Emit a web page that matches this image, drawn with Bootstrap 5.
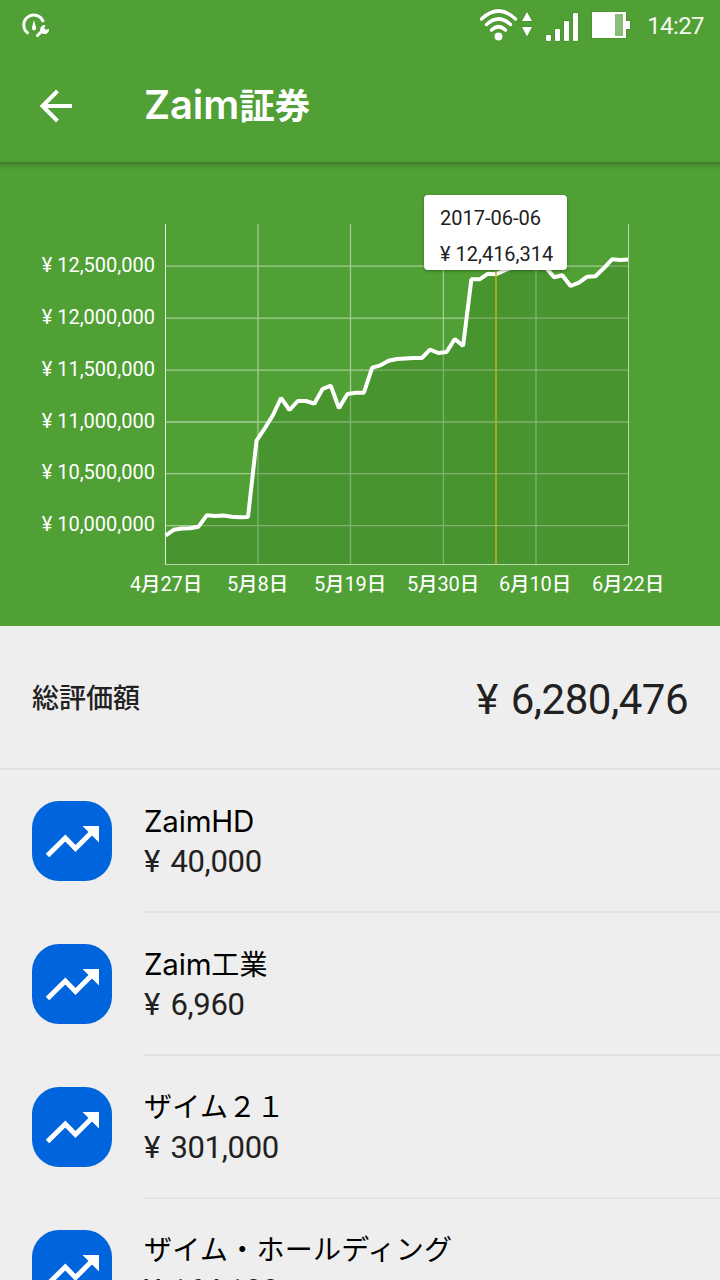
<!DOCTYPE html>
<html lang="ja">
<head>
<meta charset="utf-8">
<meta name="viewport" content="width=device-width, initial-scale=1">
<title>Zaim証券</title>
<link href="https://cdn.jsdelivr.net/npm/bootstrap@5.3.0/dist/css/bootstrap.min.css" rel="stylesheet">
<style>
body{font-family:Roboto,"Noto Sans CJK JP",sans-serif;background:#eee;color:#212121;height:1280px;overflow:hidden}
.bg-zaim{background:#50a035}
.statusbar{height:50px}
.statusbar svg,.appbar svg,.chart-area svg{display:block}
.clock{font-size:24px;line-height:28px;color:#f4faf2;letter-spacing:-.6px}
.appbar{height:112px;padding-left:36px}
.appbar h1{font:700 35.5px/44px Inter,"Noto Sans CJK JP",sans-serif;color:#fff;margin-left:68px;padding-bottom:1px}
.appbar h1 span{font-size:40px;font-weight:600;letter-spacing:-.1px}
.chart-area{height:464px}
.chart-area::before{content:"";position:absolute;inset:0 0 auto;height:8px;background:linear-gradient(rgba(0,0,0,.25),rgba(0,0,0,.1) 40%,transparent)}
.axis{font-size:20px;fill:#fff}
.dates{letter-spacing:-.1px}
.dates tspan{font-weight:500;font-size:19.5px}
.tip{left:424px;top:33px;width:143px;height:75px;background:#fff;border-radius:4px;font-size:20px;line-height:36px;padding:5px 0 0 16px;box-shadow:0 1px 3px rgba(0,0,0,.35);white-space:nowrap}
.total{height:144px;padding:0 32px;border-bottom:2px solid #e2e2e2}
.total-label{font-size:27px;line-height:40px;font-weight:500;padding-top:3px}
.total-value{font-size:42px;line-height:50px;letter-spacing:-.5px;word-spacing:3px;padding-top:5px}
.holding{height:143px;padding-left:32px}
.tile{width:80px;height:80px;border-radius:27px;background:#0064dd;margin:31px 32px 0 0}
.holding-text{border-bottom:2px solid #e2e2e2;padding-top:31px;white-space:nowrap}
.holding-name{font:400 28px/41px Inter,"Noto Sans CJK JP",sans-serif;color:#000;height:41px;letter-spacing:.25px}
.holding-name span{font-size:29.5px;letter-spacing:-.2px}
.holding-value{font-size:31px;line-height:40px;letter-spacing:-.3px;word-spacing:3px}
</style>
</head>
<body>
<svg width="0" height="0" class="position-absolute"><defs>
<symbol id="trend" viewBox="0 0 80 80"><path d="M15.500 54.500L33.300 37.000L43.500 47.500L60 31" fill="none" stroke="#fff" stroke-width="5"/><path d="M50.500 25H67V41.500Z" fill="#fff"/></symbol>
</defs></svg>
<header class="bg-zaim">
  <div class="statusbar d-flex">
    <svg width="640" height="50" fill="#fff">
      <path d="M28.500 33.500A10 10 0 1 1 43.300 22" fill="none" stroke="#fff" stroke-width="3"/>
      <path d="M34 20L36 27.500A2.100 2.100 0 1 1 32 27.500Z"/>
      <path d="M37.500 35.500L43 30" fill="none" stroke="#fff" stroke-width="3" stroke-linecap="round"/>
      <path d="M45.500 25.200A4.500 4.500 0 1 0 49 29L45.500 29.800L44.200 28.200Z"/>
      <g stroke="#3f842a" stroke-opacity=".55" stroke-width="1.500" paint-order="stroke">
        <circle cx="498.500" cy="36.500" r="4"/>
        <path d="M522 21H532L527 12Z M522 27H532L527 36.500Z"/>
        <rect x="546" y="35" width="5" height="6" rx="1"/><rect x="555" y="29" width="5" height="12" rx="1"/><rect x="564" y="21" width="5" height="20" rx="1"/><rect x="573" y="13" width="5" height="28" rx="1"/>
        <path d="M592 12H626V21H630V29H626V38H592Z"/>
      </g>
      <rect x="615" y="14" width="8" height="22" fill="#88be75"/>
      <g fill="none" stroke="#3f842a" stroke-opacity=".55" stroke-width="5" stroke-linecap="round"><path d="M481.500 19Q498.500 3 515.500 19M486.500 24.500Q498.500 13.500 510.500 24.500M491.500 30Q498.500 23.500 505.500 30"/></g>
      <g fill="none" stroke="#fff" stroke-width="3.600" stroke-linecap="round"><path d="M481.500 19Q498.500 3 515.500 19M486.500 24.500Q498.500 13.500 510.500 24.500M491.500 30Q498.500 23.500 505.500 30"/></g>
    </svg>
    <span class="clock ms-auto me-3 mt-2 pt-1">14:27</span>
  </div>
  <div class="appbar d-flex align-items-center">
    <svg width="40" height="40" fill="none" stroke="#fff" stroke-width="4"><path d="M36 20H7M21.500 5L6.500 20L21.500 35"/></svg>
    <h1 class="mb-0"><span>Zaim</span>証券</h1>
  </div>
</header>
<section class="chart-area bg-zaim position-relative">
  <svg width="720" height="464" viewBox="0 162 720 464">
    <g stroke="#fff" stroke-opacity=".48" stroke-width="1.300">
      <path d="M165 266.200H628M165 318.200H628M165 370.200H628M165 422H628M165 473.700H628M165 525.700H628M258 224V564M350.500 224V564M443.400 224V564M536 224V564"/>
    </g>
    <path fill="#3a7d26" fill-opacity=".34" d="M165.500 535.600L174 529.700 182 528.500 190 528.300 198.500 526.700 206.700 515.300 215 516 223.400 515.500 231.700 516.700 240 517.300 248 517 256.500 440.700 265 428 273 415 281 398 289.500 410 297.800 401 306 401 314.300 403.700 322.600 389 330.800 385.700 339 408.300 347.400 394 355.600 392.700 363.900 392.700 372.200 367.700 380.400 365.300 388.700 360.700 397 359 405.200 358.500 413.500 358 421.800 358 430 349.700 438.300 353 446.600 352 454.800 339 463.100 346 471.400 279.300 479.600 279.300 488 273.700 496.200 274.300 504.500 270.500 520 264 545.500 267 554 277.300 562.300 275.300 570.600 286 579 282.700 587.200 276.700 595.400 276.300 603.700 268.300 612 259.300 620.200 260 628.500 259.500V564.500H165.500Z"/>
    <path fill="none" stroke="#fff" stroke-width="4" stroke-linejoin="bevel" d="M165.500 535.600L174 529.700 182 528.500 190 528.300 198.500 526.700 206.700 515.300 215 516 223.400 515.500 231.700 516.700 240 517.300 248 517 256.500 440.700 265 428 273 415 281 398 289.500 410 297.800 401 306 401 314.300 403.700 322.600 389 330.800 385.700 339 408.300 347.400 394 355.600 392.700 363.900 392.700 372.200 367.700 380.400 365.300 388.700 360.700 397 359 405.200 358.500 413.500 358 421.800 358 430 349.700 438.300 353 446.600 352 454.800 339 463.100 346 471.400 279.300 479.600 279.300 488 273.700 496.200 274.300 504.500 270.500 520 264 545.500 267 554 277.300 562.300 275.300 570.600 286 579 282.700 587.200 276.700 595.400 276.300 603.700 268.300 612 259.300 620.200 260 628.500 259.500"/>
    <path fill="none" stroke="#e4f0e0" d="M165.500 224V564.500"/><path fill="none" stroke="#bbd6b1" d="M165.500 564.500H628.500V224"/>
    <path stroke="#c4b21d" stroke-opacity=".75" stroke-width="2" d="M496 266V564"/>
    <g class="axis" text-anchor="end">
      <text x="155" y="272">¥ 12,500,000</text><text x="155" y="324">¥ 12,000,000</text><text x="155" y="376">¥ 11,500,000</text><text x="155" y="428">¥ 11,000,000</text><text x="155" y="479">¥ 10,500,000</text><text x="155" y="531">¥ 10,000,000</text>
    </g>
    <g class="axis dates" text-anchor="middle">
      <text x="166" y="591">4<tspan>月</tspan>27<tspan>日</tspan></text><text x="257.500" y="591">5<tspan>月</tspan>8<tspan>日</tspan></text><text x="350" y="591">5<tspan>月</tspan>19<tspan>日</tspan></text><text x="443" y="591">5<tspan>月</tspan>30<tspan>日</tspan></text><text x="535" y="591">6<tspan>月</tspan>10<tspan>日</tspan></text><text x="628" y="591">6<tspan>月</tspan>22<tspan>日</tspan></text>
    </g>
  </svg>
  <div class="tip position-absolute"><div>2017-06-06</div><div>¥ 12,416,314</div></div>
</section>
<main>
  <div class="total d-flex align-items-center justify-content-between"><span class="total-label">総評価額</span><span class="total-value">¥ 6,280,476</span></div>
  <div class="holding d-flex"><svg class="tile flex-shrink-0"><use href="#trend"/></svg><div class="holding-text flex-grow-1"><div class="holding-name"><span>ZaimHD</span></div><div class="holding-value">¥ 40,000</div></div></div>
  <div class="holding d-flex"><svg class="tile flex-shrink-0"><use href="#trend"/></svg><div class="holding-text flex-grow-1"><div class="holding-name"><span>Zaim</span>工業</div><div class="holding-value">¥ 6,960</div></div></div>
  <div class="holding d-flex"><svg class="tile flex-shrink-0"><use href="#trend"/></svg><div class="holding-text flex-grow-1"><div class="holding-name">ザイム２１</div><div class="holding-value">¥ 301,000</div></div></div>
  <div class="holding d-flex"><svg class="tile flex-shrink-0"><use href="#trend"/></svg><div class="holding-text flex-grow-1"><div class="holding-name">ザイム・ホールディング</div><div class="holding-value">¥ 164,188</div></div></div>
</main>
<script src="https://cdn.jsdelivr.net/npm/bootstrap@5.3.0/dist/js/bootstrap.bundle.min.js"></script>
</body>
</html>
